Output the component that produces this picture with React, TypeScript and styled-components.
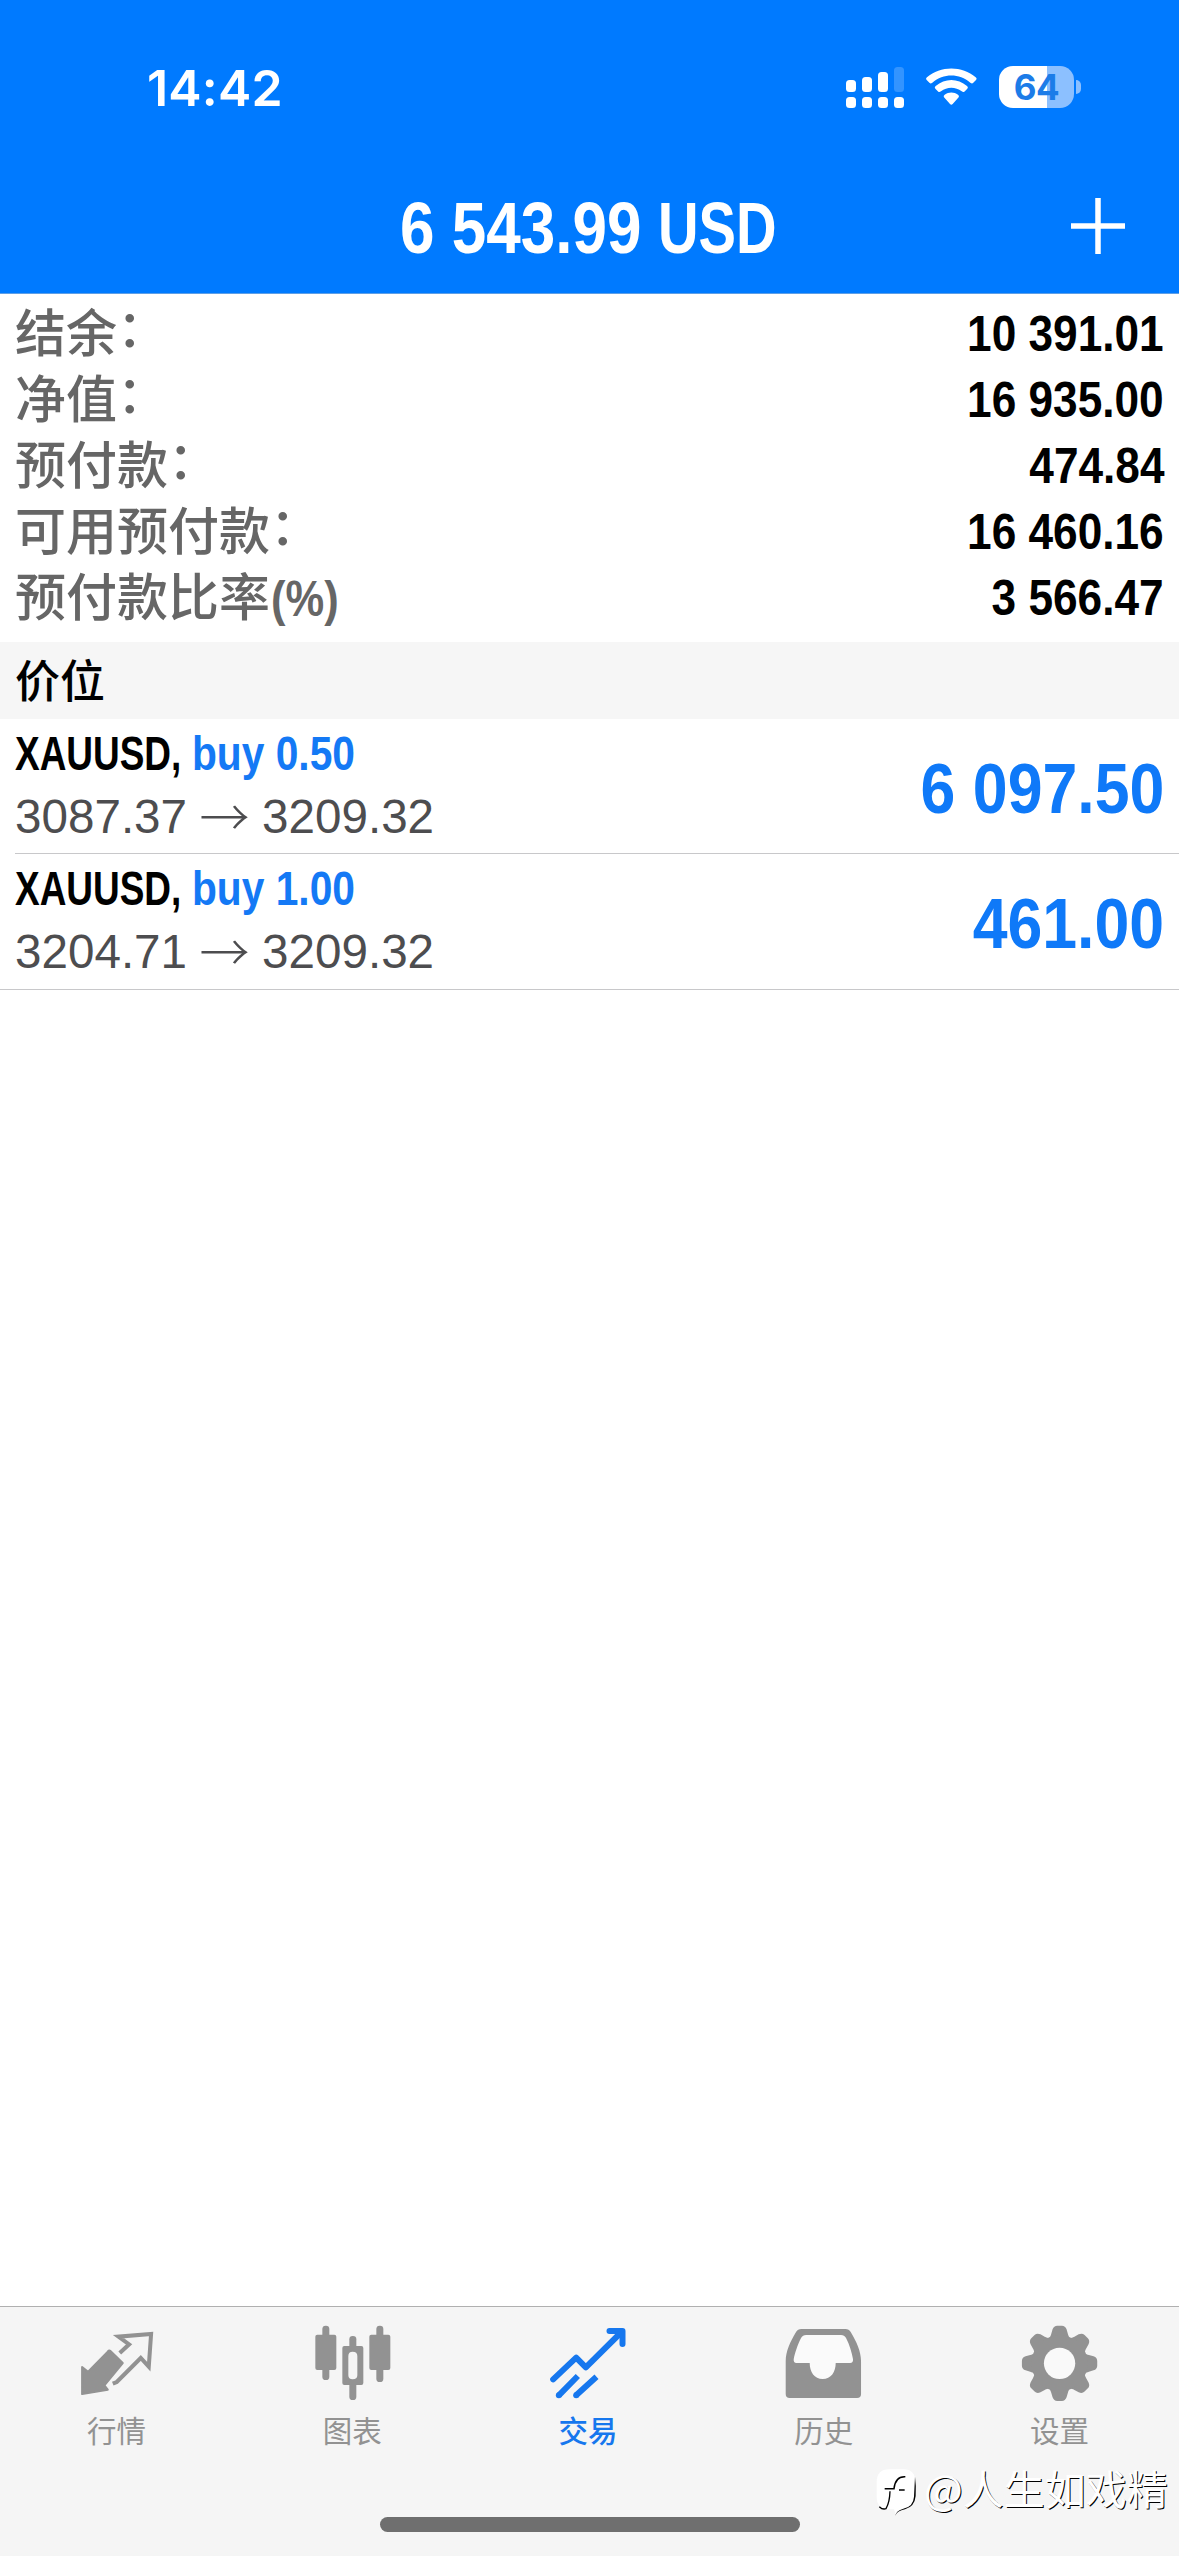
import React from "react";
import styled, { createGlobalStyle } from "styled-components";

const sans = `"Liberation Sans", "Noto Sans CJK SC", Arial, sans-serif`;
const cjk = `"Noto Sans CJK SC", "Liberation Sans", sans-serif`;

const GlobalStyle = createGlobalStyle`
  * { box-sizing: border-box; }
  body { margin: 0; background: #fff; font-family: ${sans}; }
`;

const Screen = styled.div`
  position: relative;
  display: flex;
  flex-direction: column;
  width: 1179px;
  height: 2556px;
  overflow: hidden;
  background: #fff;
`;

const Header = styled.header`
  height: 294px;
  background: #007aff;
  border-bottom: 1px solid #5f9fe6;
  color: #fff;
`;

const StatusBar = styled.div`
  height: 160px;
  padding: 20px 98px 0 147px;
  display: flex;
  align-items: flex-start;
  justify-content: space-between;
`;

const Clock = styled.div`
  margin-top: 38px;
  font: 600 50px/60px Inter, sans-serif;
  letter-spacing: 0.2px;
`;

const StatusIcons = styled.div`
  display: flex;
  margin-top: 45px;
`;

const Battery = styled.div`
  display: flex;
  align-items: center;
  margin-left: 22px;
`;

const BatteryBody = styled.div`
  width: 75px;
  height: 42px;
  border-radius: 14px;
  background: linear-gradient(90deg, #fff 48px, #8cc0ff 48px);
  color: #1c7ce8;
  font: 700 35px/42px Inter, sans-serif;
  text-align: center;
  letter-spacing: -0.5px;
`;

const BatteryCap = styled.div`
  width: 5px;
  height: 14px;
  margin-left: 2px;
  border-radius: 0 7px 7px 0;
  background: #8cc0ff;
`;

const TitleBar = styled.div`
  height: 133px;
  display: grid;
  grid-template-columns: 1fr 380px 1fr;
  align-items: center;
`;

const AddButton = styled.button`
  grid-column: 3;
  justify-self: end;
  width: 54px;
  height: 56px;
  margin: 0 54px 1px 0;
  padding: 0;
  border: 0;
  background: none;
  display: flex;
`;

/* Reserves the narrowed width of a condensed run of text. */
const CondensedBox = styled.span<{ $width: number; $end?: boolean }>`
  display: flex;
  flex: none;
  width: ${(p) => p.$width}px;
  justify-content: ${(p) => (p.$end ? "flex-end" : "flex-start")};
`;

const CondensedText = styled.span<{ $size: number; $scale: number; $color: string; $end?: boolean }>`
  flex: none;
  white-space: pre;
  font: 700 ${(p) => p.$size}px/1.16 ${sans};
  color: ${(p) => p.$color};
  transform: scaleX(${(p) => p.$scale});
  transform-origin: ${(p) => (p.$end ? "right" : "left")} center;
`;

type CondensedProps = {
  children: React.ReactNode;
  width: number;
  size: number;
  scale: number;
  color?: string;
  end?: boolean;
};

const Condensed = ({ children, width, size, scale, color = "#000", end }: CondensedProps) => (
  <CondensedBox $width={width} $end={end}>
    <CondensedText $size={size} $scale={scale} $color={color} $end={end}>
      {children}
    </CondensedText>
  </CondensedBox>
);

const TitleSlot = styled.h1`
  grid-column: 2;
  margin: 3px 0 0;
  display: flex;
`;

const Summary = styled.section`
  height: 348px;
  padding: 7px 15px 0;
`;

const SummaryRow = styled.div`
  height: 66px;
  display: flex;
  align-items: center;
  justify-content: space-between;
`;

const Label = styled.span`
  display: flex;
  align-items: center;
  font: 500 51px/66px ${sans};
  color: #666;
  margin-top: 2px;
`;

const Colon = styled.span`
  width: 51px;
  transform: translateY(-5px);
`;

const Suffix = styled.span`
  margin: 0 0 0 1px;
`;

const SectionHeader = styled.h2`
  margin: 0;
  height: 77px;
  padding-left: 15px;
  background: #f6f6f6;
  font: 500 45px/73px ${cjk};
  color: #000;
`;

const PositionRow = styled.div<{ $last: boolean }>`
  height: ${(p) => (p.$last ? 136 : 135)}px;
  margin-left: ${(p) => (p.$last ? 0 : 15)}px;
  padding: 7px 15px 0 ${(p) => (p.$last ? 15 : 0)}px;
  border-bottom: 1px solid #c8c8ca;
  display: flex;
  justify-content: space-between;
`;

const PositionInfo = styled.div`
  display: flex;
  flex-direction: column;
`;

const SymbolLine = styled.div`
  display: flex;
  height: 61px;
`;

const PriceLine = styled.div`
  display: flex;
  align-items: center;
  gap: 13px;
  height: 58px;
  padding-top: 1px;
  font: 400 47.6px/58px ${sans};
  color: #4d4d4f;
`;

const Arrow = styled.span`
  width: 49px;
  display: flex;
  justify-content: center;
  font: 300 50px/58px "Noto Sans CJK SC", sans-serif;
  transform: translateY(-3px);
`;

const Profit = styled.div`
  margin-top: 22px;
`;

const Spacer = styled.div`
  flex: 1;
`;

const Footer = styled.footer`
  height: 250px;
  background: #f5f5f5;
  border-top: 1px solid #b0b0b0;
  display: flex;
  flex-direction: column;
  align-items: center;
`;

const Tabs = styled.nav`
  width: 100%;
  height: 210px;
  padding-top: 15px;
  display: grid;
  grid-template-columns: repeat(5, 1fr);
`;

const Tab = styled.div<{ $active?: boolean }>`
  display: flex;
  flex-direction: column;
  align-items: center;
  color: ${(p) => (p.$active ? "#1677ee" : "#929292")};
  font: ${(p) => (p.$active ? 500 : 400)} 29.5px/44px ${cjk};

  svg { width: 80px; height: 80px; margin-bottom: 5px; display: block; }
`;

const TabName = styled.span`
  padding-right: 3px;
`;

const HomeIndicator = styled.div`
  width: 420px;
  height: 15px;
  border-radius: 8px;
  background: #6f6f6f;
`;

const Watermark = styled.div`
  position: absolute;
  left: 876px;
  top: 2453px;
  display: flex;
  align-items: center;
  font: 400 41px/48px ${cjk};
  color: #fff;
  text-shadow: 1px 1px 0.5px #000;
  white-space: nowrap;

  svg { width: 44px; height: 52px; margin: 15px 4px 0 0; display: block; }
`;

const SignalIcon = () => (
  <svg width="59" height="44" viewBox="0 0 59 44" fill="#fff">
    {[0, 16, 32, 48].map((x, i) => (
      <React.Fragment key={x}>
        <rect x={x} y={[15, 12, 7, 2][i]} width="10" height={[12, 15, 20, 25][i]} rx="3.5" fillOpacity={i === 3 ? 0.2 : 1} />
        <rect x={x} y="32" width="10" height="11" rx="3.5" />
      </React.Fragment>
    ))}
  </svg>
);

const WifiIcon = () => (
  <svg width="51" height="44" viewBox="0 -3 153 132" fill="#fff" style={{ marginLeft: 21 }}>
    <path d="M2 42Q-2 38 3 34C43-1 109-1 149 34Q154 38 150 42L141 51Q138 54 133 50C100 21 52 21 19 50Q14 54 11 51Z" />
    <path d="M28 68Q24 64 29 60C57 36 95 36 123 60Q128 64 124 68L115 77Q112 80 107 76C89 62 63 62 45 76Q40 80 37 77Z" />
    <path d="M54 94Q51 90 56 86C68 77 84 77 96 86Q101 90 98 94L80 114Q76 119 72 114Z" />
  </svg>
);

const QuotesIcon = () => (
  <svg viewBox="113.7 96 240 240">
    <path d="M211 183L248 219L193 286L203 299L126 312V231L144 245L203 185Q207 179 211 183Z" fill="currentColor" stroke="currentColor" strokeWidth="6" strokeLinejoin="round" />
    <path d="M239 189L267 163L235 140L333 132L326 230L302 204L230 276L218 281" fill="none" stroke="currentColor" strokeWidth="12" />
  </svg>
);

const ChartsIcon = () => (
  <svg viewBox="821 96 240 240" fill="currentColor">
    <rect x="825" y="134" width="63" height="106" rx="6" />
    <rect x="846" y="107" width="21" height="163" rx="10" />
    <rect x="987" y="134" width="63" height="106" rx="6" />
    <rect x="1008" y="107" width="21" height="169" rx="10" />
    <rect x="927" y="138" width="21" height="40" rx="10" />
    <rect x="927" y="272" width="21" height="58" rx="10" />
    <path fillRule="evenodd" d="M912 168H963Q969 168 969 174V279Q969 285 963 285H912Q906 285 906 279V174Q906 168 912 168ZM937 185Q924 185 924 198V256Q924 268 937 268Q951 268 951 256V198Q951 185 937 185Z" />
  </svg>
);

const TradeIcon = () => (
  <svg viewBox="148.5 96 240 240" fill="none" stroke="currentColor" strokeWidth="18" strokeLinejoin="round">
    <path d="M161 268L230 203L259 232L366 126" strokeLinecap="round" />
    <path d="M330 123H369V162" strokeLinecap="round" />
    <path d="M235 258L178 316M291 260L230 316" />
    <circle cx="178" cy="316" r="9" fill="currentColor" stroke="none" />
    <circle cx="230" cy="316" r="9" fill="currentColor" stroke="none" />
  </svg>
);

const HistoryIcon = () => (
  <svg viewBox="855.9 96 240 240">
    <path
      fill="currentColor"
      d="M905 117H1037Q1048 117 1053 126C1071 156 1084 184 1084 214V312Q1084 324 1072 324H870Q858 324 858 312V214C858 184 871 156 889 126Q894 117 905 117Z"
    />
    <path fill="#fafafa" d="M919 135Q909 135 904 144C894 164 885 190 882 208Q881 219 890 219H930C930 246 944 267 969 267C994 267 1008 246 1008 219H1051Q1061 219 1060 208C1056 188 1050 164 1039 144Q1034 135 1024 135Z" />
  </svg>
);

const SettingsIcon = () => (
  <svg viewBox="513.3 96 240 240" fill="currentColor">
    {[0, 45, 90, 135, 180, 225, 270, 315].map((a) => (
      <path key={a} transform={`rotate(${a} 629 220)`} d="M585 152C597 148 601 142 604 132L608 118Q612 107 622 107H636Q646 107 650 118L654 132C657 142 661 148 673 152L629 200Z" />
    ))}
    <circle cx="629" cy="220" r="84" />
    <circle cx="629" cy="220" r="47" fill="#f9f9f9" />
  </svg>
);

const WatermarkLogo = () => (
  <svg viewBox="78 536 132 156">
    <path d="M118 540H160Q196 540 196 578V620Q196 652 163 660Q146 663 138 678L132 660H118Q80 660 80 622V578Q80 540 118 540Z" fill="#fff" />
    <path d="M195 562Q199 590 197 620Q194 652 165 660Q142 664 136 679Q138 664 160 658Q190 652 192 622" fill="#000" />
    <path d="M166 562Q136 560 132 598H104M147 602H164" fill="none" stroke="#000" strokeWidth="4.5" />
    <path d="M120 606Q119 640 108 658Q98 662 88 652" fill="none" stroke="#000" strokeWidth="4" />
  </svg>
);

const summary = [
  { label: "结余", colon: true, value: "10 391.01" },
  { label: "净值", colon: true, value: "16 935.00" },
  { label: "预付款", colon: true, value: "474.84" },
  { label: "可用预付款", colon: true, value: "16 460.16" },
  { label: "预付款比率", suffix: "(%)", value: "3 566.47" },
];

const positions = [
  { volume: "buy 0.50", open: "3087.37", current: "3209.32", profit: "6 097.50" },
  { volume: "buy 1.00", open: "3204.71", current: "3209.32", profit: "461.00" },
];

const tabs = [
  { name: "行情", Icon: QuotesIcon },
  { name: "图表", Icon: ChartsIcon },
  { name: "交易", Icon: TradeIcon, active: true },
  { name: "历史", Icon: HistoryIcon },
  { name: "设置", Icon: SettingsIcon },
];

export default function App() {
  return (
    <Screen>
      <GlobalStyle />
      <Header>
        <StatusBar>
          <Clock>14:42</Clock>
          <StatusIcons>
            <SignalIcon />
            <WifiIcon />
            <Battery>
              <BatteryBody>64</BatteryBody>
              <BatteryCap />
            </Battery>
          </StatusIcons>
        </StatusBar>
        <TitleBar>
          <TitleSlot>
            <Condensed width={258} size={73} scale={0.85} color="#fff">6 543.99</Condensed>
            <Condensed width={120} size={73} scale={0.77} color="#fff">USD</Condensed>
          </TitleSlot>
          <AddButton aria-label="Add">
            <svg width="54" height="56" viewBox="0 0 54 56" stroke="#fff" strokeWidth="5.5">
              <path d="M0 28H54M27 0V56" />
            </svg>
          </AddButton>
        </TitleBar>
      </Header>

      <Summary>
        {summary.map((row) => (
          <SummaryRow key={row.label}>
            <Label>
              {row.label}
              {row.colon && <Colon>{"\uff1a"}</Colon>}
              {row.suffix && (
                <Suffix>
                  <Condensed width={68} size={50} scale={0.87} color="#666">{row.suffix}</Condensed>
                </Suffix>
              )}
            </Label>
            <Condensed width={196} size={50.5} scale={0.875} end>{row.value}</Condensed>
          </SummaryRow>
        ))}
      </Summary>

      <SectionHeader>价位</SectionHeader>
      {positions.map((p, i) => (
        <PositionRow key={p.volume} $last={i === positions.length - 1}>
          <PositionInfo>
            <SymbolLine>
              <Condensed width={177} size={47.5} scale={0.778}>XAUUSD,</Condensed>
              <Condensed width={164} size={47.5} scale={0.857} color="#1479f5">{p.volume}</Condensed>
            </SymbolLine>
            <PriceLine>
              <span>{p.open}</span>
              <Arrow>→</Arrow>
              <span>{p.current}</span>
            </PriceLine>
          </PositionInfo>
          <Profit>
            <Condensed width={245} size={71} scale={0.882} color="#0f79f8" end>{p.profit}</Condensed>
          </Profit>
        </PositionRow>
      ))}

      <Spacer />

      <Footer>
        <Tabs>
          {tabs.map(({ name, Icon, active }) => (
            <Tab key={name} $active={active}>
              <Icon />
              <TabName>{name}</TabName>
            </Tab>
          ))}
        </Tabs>
        <HomeIndicator />
      </Footer>

      <Watermark>
        <WatermarkLogo />
        @人生如戏精
      </Watermark>
    </Screen>
  );
}
